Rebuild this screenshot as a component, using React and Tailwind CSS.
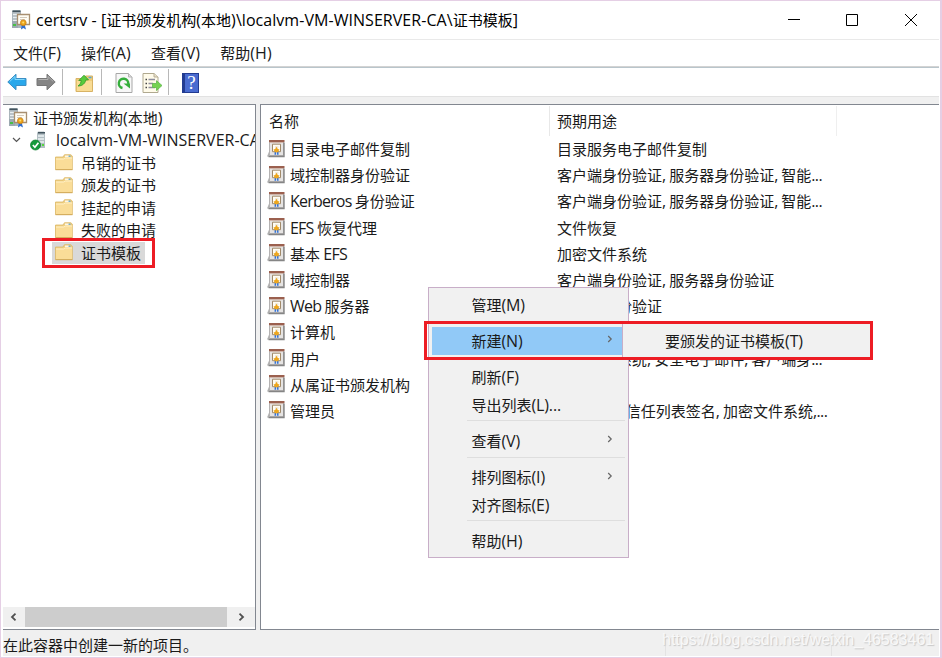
import React from 'react';

const templates = [
  { name: '目录电子邮件复制', usage: '目录服务电子邮件复制' },
  { name: '域控制器身份验证', usage: '客户端身份验证, 服务器身份验证, 智能...' },
  { name: 'Kerberos 身份验证', usage: '客户端身份验证, 服务器身份验证, 智能...' },
  { name: 'EFS 恢复代理', usage: '文件恢复' },
  { name: '基本 EFS', usage: '加密文件系统' },
  { name: '域控制器', usage: '客户端身份验证, 服务器身份验证' },
  { name: 'Web 服务器', usage: '服务器身份验证' },
  { name: '计算机', usage: '客户端身份验证, 服务器身份验证' },
  { name: '用户', usage: '加密文件系统, 安全电子邮件, 客户端身...' },
  { name: '从属证书颁发机构', usage: '所有' },
  { name: '管理员', usage: 'Microsoft 信任列表签名, 加密文件系统,...' },
];

const folders = ['吊销的证书', '颁发的证书', '挂起的申请', '失败的申请', '证书模板'];

const menuItems = [
  { label: '管理(M)' },
  { separator: true },
  { label: '新建(N)', arrow: true, active: true },
  { separator: true },
  { label: '刷新(F)' },
  { label: '导出列表(L)...' },
  { separator: true },
  { label: '查看(V)', arrow: true },
  { separator: true },
  { label: '排列图标(I)', arrow: true },
  { label: '对齐图标(E)' },
  { separator: true },
  { label: '帮助(H)' },
];

// Latin runs are one pixel larger than the Chinese text around them
function Text({ children, tracking = 'tracking-[-0.1px]' }) {
  return children.split(/([\x20-\x7e]+)/).map((part, i) =>
    i % 2 ? <span key={i} className={`text-[16px] leading-none whitespace-pre ${tracking}`}>{part}</span> : part
  );
}

function CaIcon() {
  return (
    <svg width="20" height="20" viewBox="0 0 20 20" className="shrink-0">
      <path d="M1 1l1-1h7l1 1v17H1z" fill="#aab5bb" />
      <path d="M1.500 .5h8v1.500h-8z" fill="#43545e" />
      <path d="M2 4.500h7M2 7.500h7M2 10.500h7" stroke="#e9eff1" strokeWidth="1.500" />
      <path d="M1 11h6v7H1z" fill="#9ba9b0" />
      <path d="M2 14h3v2H2z" fill="#48bf46" />
      <path d="M6.500 4.500h12v10h-12z" fill="#fffdf4" stroke="#a88f70" strokeWidth="1.300" />
      <path d="M9 7.500h7M9 9.500h5" stroke="#d3cabd" />
      <path d="M10.500 14l-.5 5.500 2.300-1.500V15zM13.500 14l1.500 5.500-2.700-1.500V15z" fill="#2f6ed0" />
      <circle cx="12.300" cy="12.800" r="2.900" fill="#eba51d" stroke="#c8790b" strokeWidth=".7" />
      <circle cx="12.200" cy="12.400" r="1" fill="#ffdd70" />
    </svg>
  );
}

function ServerIcon() {
  return (
    <svg width="18" height="20" viewBox="0 0 18 20" className="shrink-0">
      <path d="M7 2l1-1.500h6l1 1.500v15H7z" fill="#b3bfc4" />
      <path d="M8 1h7v1.500H8z" fill="#41535c" />
      <path d="M8 5h6M8 8h6M8 11h6" stroke="#edf3f4" strokeWidth="1.500" />
      <path d="M12 13h2v2h-2z" fill="#55d83d" />
      <circle cx="5.500" cy="14" r="5" fill="#159a3b" stroke="#0b7b2c" strokeWidth="0.700" />
      <path d="M2.900 14l2 2.200 3.500-4.500" fill="none" stroke="#fff" strokeWidth="1.700" />
    </svg>
  );
}

function FolderIcon() {
  return (
    <svg width="18" height="17" viewBox="0 0 18 17" className="shrink-0">
      <path d="M.5 3h7.500L9.500.7h6.200L17.300 2v13.500H.5z" fill="#efcf83" stroke="#dcb765" strokeWidth=".8" />
      <path d="M10 2.200h4" stroke="#fff" strokeWidth="1.200" />
      <path d="M13.500 2.200h2" stroke="#5aa7d8" strokeWidth="1.200" />
      <path d="M1 4.500h7.500L10 3.500h7V15H1z" fill="#fadd98" />
      <path d="M1 5h7.800l1.500-1H17" fill="none" stroke="#fff0c5" />
      <path d="M.5 15.700h17" stroke="#d2ab5b" />
    </svg>
  );
}

function TemplateIcon() {
  return (
    <svg width="18" height="18" viewBox="0 0 18 18" className="shrink-0">
      <path d="M0 16.500l2.500-6v6z" fill="#b3b3b3" />
      <path d="M2.500 1h14v14.500h-14z" fill="#e6e4e3" stroke="#b4b2b2" />
      <path d="M2 0h15.500v2.200H2z" fill="#9b604f" />
      <path d="M2.500 2.500h14" stroke="#cfae9f" strokeWidth=".7" />
      <path d="M17 2.500v14H1.500" fill="none" stroke="#858585" strokeWidth="1.400" />
      <path d="M5.500 4.200h8v7.500h-8z" fill="#fffdf5" stroke="#a18a6a" />
      <path d="M8 6.200h3.500v2H8z" fill="#eee7d9" />
      <path d="M7.700 11h1.400v3.800H7.500zM10 11h1.400l.2 3.800H10z" fill="#3373d9" />
      <path d="M9.500 6.800l1.100 2 2 .9-1.100 1.300.1 1.300H7.400l.1-1.300-1.100-1.300 2-.9z" fill="#eda61d" />
    </svg>
  );
}

function ArrowIcon({ flip, dark }) {
  return (
    <svg width="20" height="18" viewBox="0 0 20 18" className={flip ? '-scale-x-100' : ''}>
      <path
        d="M.8 9L9 1.200V5.500h10v7H9v4.300z"
        fill={dark ? '#858585' : '#29a8eb'}
        stroke={dark ? '#777' : '#3c8fc4'}
        strokeLinejoin="round"
      />
      <path d="M2.700 8.500L8 3.500v3h9.500" fill="none" stroke={dark ? '#b2b2b2' : '#83d8fb'} />
    </svg>
  );
}

function UpFolderIcon() {
  return (
    <svg width="19" height="20" viewBox="0 0 19 20">
      <path d="M1 5.500h8l1.500-2.500h7v15.500H1z" fill="#efcc7a" stroke="#d8b365" />
      <path d="M13.500 4.500h3" stroke="#5aa8d5" strokeWidth="1.500" />
      <path d="M2 8h15v10H2z" fill="#f9dc95" />
      <path d="M3 13c2.300-1.500 3-3.500 3.200-5.500H3.800L9 2.200l4.500 4.600-2.700.2C10 10.500 7.500 13 3 13z" fill="#58cb3d" stroke="#2e9b28" strokeWidth=".8" />
    </svg>
  );
}

function RefreshIcon() {
  return (
    <svg width="18" height="20" viewBox="0 0 18 20">
      <path d="M1 .5h12.500L17 4v15.500H1z" fill="#f7f7f7" stroke="#a7a7a7" />
      <path d="M13.500.5V4H17" fill="#dedede" stroke="#b5b5b5" />
      <path d="M7.500 15A4.700 4.700 0 1 1 13.200 11" fill="none" stroke="#35ae3b" strokeWidth="2.400" />
      <path d="M8.500 10.500h6.500v5z" fill="#35ae3b" />
    </svg>
  );
}

function ExportIcon() {
  return (
    <svg width="21" height="20" viewBox="0 0 21 20">
      <path d="M1 .5h11L16 4v15.500H1z" fill="#fffbea" stroke="#b0a98f" />
      <path d="M12 .5V4h4" fill="#e8dfc7" stroke="#b9af97" />
      <path d="M3.500 6.500H5M3.500 10.500H5M3.500 14.500H5" stroke="#444" strokeWidth="1.300" />
      <path d="M6.500 6.500H13M6.500 10.500H11M6.500 14.500H13" stroke="#8c8c9c" strokeWidth="1.300" />
      <path d="M10.500 10.500h4V7.700l5.500 4.800-5.500 5V14.500h-4z" fill="#75d351" stroke="#5fb84d" strokeWidth=".8" />
    </svg>
  );
}

function HelpIcon() {
  return (
    <div className="flex h-5 w-[17px] items-center justify-center border border-l-[3px] border-[#223b91] bg-[#496bd0] text-[19px] leading-none text-white">
      <span className="font-['Liberation_Serif',serif]">?</span>
    </div>
  );
}

function Chevron({ className = '' }) {
  return (
    <svg width="6" height="8" viewBox="0 0 6 8" className={className}>
      <path d="M1.200 1L4.200 4 1.200 7" fill="none" stroke="currentColor" strokeWidth="1.200" />
    </svg>
  );
}

function TitleBar() {
  return (
    <div className="flex h-[39px] shrink-0 items-center border-b border-[#e9e9e9] pl-2 text-black">
      <CaIcon />
      <span className="ml-[5px] flex-1 pb-px whitespace-nowrap">
        <Text tracking="tracking-[0.05px]">{'certsrv - [证书颁发机构(本地)\\localvm-VM-WINSERVER-CA\\证书模板]'}</Text>
      </span>
      <svg width="153" height="14" viewBox="0 0 153 14" fill="none" stroke="#000" strokeWidth="1">
        <path d="M2 6.500h12" />
        <path d="M60.500 1.500h11v11h-11z" />
        <path d="M119 1l12 12M131 1l-12 12" />
      </svg>
    </div>
  );
}

function Toolbar() {
  return (
    <div className="flex h-7 shrink-0 items-center pl-1">
      <ArrowIcon />
      <div className="ml-[9px] flex"><ArrowIcon flip dark /></div>
      <div className="ml-[6px] h-[26px] w-px bg-[#b8b8b8]" />
      <div className="ml-3 pt-px"><UpFolderIcon /></div>
      <div className="ml-[7px] h-[26px] w-px bg-[#b8b8b8]" />
      <div className="ml-[13px] pt-px"><RefreshIcon /></div>
      <div className="ml-[9px] pt-px"><ExportIcon /></div>
      <div className="ml-[5px] h-[26px] w-px bg-[#b8b8b8]" />
      <div className="ml-[13px] pt-px"><HelpIcon /></div>
    </div>
  );
}

function TreePane() {
  return (
    <div className="flex w-[253px] shrink-0 flex-col border-t border-r border-b border-[#828790] bg-white">
      <div className="flex-1 overflow-hidden pt-[1.5px] whitespace-nowrap">
        <div className="flex h-[22.5px] items-center pt-px pl-[5px]">
          <CaIcon />
          <span className="ml-[5px]"><Text>证书颁发机构(本地)</Text></span>
        </div>
        <div className="flex h-[22.5px] items-center pl-[9px]">
          <svg width="9" height="6" viewBox="0 0 9 6" fill="none" stroke="#555" strokeWidth="1.200" className="shrink-0"><path d="M1 1l3.500 3.500L8 1" /></svg>
          <div className="ml-[9px] shrink-0 pt-px"><ServerIcon /></div>
          <span className="ml-[8px]"><Text tracking="tracking-normal">localvm-VM-WINSERVER-CA</Text></span>
        </div>
        {folders.map((name) => (
          <div key={name} className="flex h-[22.5px] items-center pl-[49px]">
            <div className={name === '证书模板' ? 'flex h-[22px] items-center bg-[#d9d9d9] pr-1 pl-[3px]' : 'flex items-center pl-[3px]'}>
              <FolderIcon />
              <span className="ml-2">{name}</span>
            </div>
          </div>
        ))}
      </div>
      <div className="mb-[2px] flex h-5 items-center bg-[#f0f0f0] text-[#505050]">
        <div className="flex w-[22px] justify-center pr-[2px]">
          <svg width="7" height="8" viewBox="0 0 7 8" fill="none" stroke="currentColor" strokeWidth="1.800"><path d="M5.500 .7L2 4l3.500 3.300" /></svg>
        </div>
        <div className="h-full w-[202px] bg-[#cdcdcd]" />
        <div className="flex flex-1 justify-center pl-px">
          <svg width="7" height="8" viewBox="0 0 7 8" fill="none" stroke="currentColor" strokeWidth="1.800"><path d="M1.500 .7L5 4 1.500 7.300" /></svg>
        </div>
      </div>
    </div>
  );
}

function ListPane() {
  return (
    <div className="flex-1 overflow-hidden border-t border-b border-l border-[#828790] bg-white whitespace-nowrap">
      <div className="flex h-[31px] items-center pt-px">
        <div className="flex h-full w-[289px] items-center border-r border-[#e8e8e8] pl-2">名称</div>
        <div className="flex h-full w-[287px] items-center border-r border-[#efefef] pl-[7px]">预期用途</div>
      </div>
      {templates.map((t) => (
        <div key={t.name} className="flex h-[26.2px] items-center">
          <div className="flex w-[296px] items-center pl-[6px]">
            <div className="pb-px"><TemplateIcon /></div>
            <span className="ml-[5px]"><Text tracking="tracking-[-0.8px]">{t.name}</Text></span>
          </div>
          <span><Text tracking="tracking-[-0.6px]">{t.usage}</Text></span>
        </div>
      ))}
    </div>
  );
}

function ContextMenu() {
  return (
    <div className="absolute top-[286px] left-[427px] h-[271px] w-[201px] border border-[#c8aec8] bg-[#f1f1f1] p-[3px]">
      {menuItems.map((item, i) =>
        item.separator ? (
          <div key={i} className="h-[8.7px] pt-[2px] pl-[35px]">
            <div className="h-px bg-[#dedede]" />
          </div>
        ) : (
          <div
            key={i}
            className={`flex h-[27.5px] items-center justify-between pr-3 pl-[39.5px] ${item.active ? 'bg-[#91c9f7]' : ''}`}
          >
            <span><Text tracking="tracking-[-0.15px]">{item.label}</Text></span>
            {item.arrow && <Chevron className="-mt-[3px] text-[#666]" />}
          </div>
        )
      )}
    </div>
  );
}

export default function App() {
  return (
    <div className="relative flex h-[658px] w-[942px] flex-col overflow-hidden border border-r-2 border-[#e5cfe5] bg-white pr-px pl-[2px] font-['Open_Sans','Noto_Sans_CJK_SC',sans-serif] text-[15px] leading-[22px] text-[#1a1a1a]">
      <TitleBar />
      <div className="flex h-[26px] shrink-0 items-center gap-5 pb-px pl-[10px]">
        {['文件(F)', '操作(A)', '查看(V)', '帮助(H)'].map((label) => (
          <span key={label}><Text tracking="tracking-[0.1px]">{label}</Text></span>
        ))}
      </div>
      <div className="h-[2px] shrink-0 border-t border-[#d3d3d3] bg-[#b9c5cb]" />
      <Toolbar />
      <div className="h-2 shrink-0 border-t border-[#e2e2e2] bg-[#f0f0f0]" />
      <div className="flex h-[526px] shrink-0 gap-1 bg-[#f0f0f0]">
        <TreePane />
        <ListPane />
      </div>
      <div className="flex h-[26px] shrink-0 items-center bg-[#f0f0f0] pt-1">
        <span className="w-[662px] whitespace-nowrap">在此容器中创建一新的项目。</span>
        <div className="h-full w-[167px] border-x border-[#e3e3e3]" />
      </div>

      <ContextMenu />
      <div className="absolute top-[322px] left-[621px] flex h-[36px] w-[249px] items-center border-l border-[#c8aec8] bg-[#f1f1f1] pl-[42px]">
        <span className="pb-px"><Text>要颁发的证书模板(T)</Text></span>
      </div>

      {/* Red highlight boxes */}
      <div className="absolute top-[320px] left-[423px] h-[39px] w-[449px] border-3 border-[#ed1c24]" />
      <div className="absolute top-[237px] left-[41px] h-[30px] w-[113px] border-3 border-[#ed1c24]" />

      <div className="absolute top-[629px] left-[661px] font-['Liberation_Sans',sans-serif] text-[16px] leading-5 whitespace-nowrap text-[#f8f8f8] [text-shadow:1px_1px_1px_#c8c8c8]">
        https://blog.csdn.net/weixin_46583461
      </div>
    </div>
  );
}
